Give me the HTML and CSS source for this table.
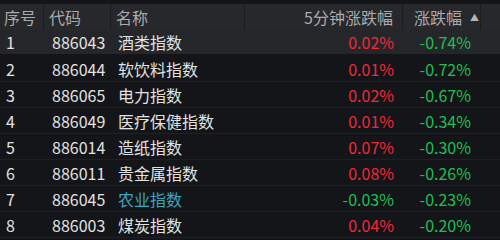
FILE: index.html
```html
<!DOCTYPE html>
<html>
<head>
<meta charset="utf-8">
<link rel="stylesheet" href="styles.css">
</head>
<body>
<div class="table">
  <div class="row head">
    <div class="c idx">序号</div>
    <div class="c code">代码</div>
    <div class="c name">名称</div>
    <div class="c m5">5分钟涨跌幅</div>
    <div class="c chg">涨跌幅<span class="arrow">▲</span></div>
    <div class="c tail"></div>
  </div>
  <div class="row sel">
    <div class="c idx">1</div><div class="c code">886043</div><div class="c name">酒类指数</div><div class="c m5 up">0.02%</div><div class="c chg down">-0.74%</div><div class="c tail"></div>
  </div>
  <div class="row">
    <div class="c idx">2</div><div class="c code">886044</div><div class="c name">软饮料指数</div><div class="c m5 up">0.01%</div><div class="c chg down">-0.72%</div><div class="c tail"></div>
  </div>
  <div class="row">
    <div class="c idx">3</div><div class="c code">886065</div><div class="c name">电力指数</div><div class="c m5 up">0.02%</div><div class="c chg down">-0.67%</div><div class="c tail"></div>
  </div>
  <div class="row">
    <div class="c idx">4</div><div class="c code">886049</div><div class="c name">医疗保健指数</div><div class="c m5 up">0.01%</div><div class="c chg down">-0.34%</div><div class="c tail"></div>
  </div>
  <div class="row">
    <div class="c idx">5</div><div class="c code">886014</div><div class="c name">造纸指数</div><div class="c m5 up">0.07%</div><div class="c chg down">-0.30%</div><div class="c tail"></div>
  </div>
  <div class="row">
    <div class="c idx">6</div><div class="c code">886011</div><div class="c name">贵金属指数</div><div class="c m5 up">0.08%</div><div class="c chg down">-0.26%</div><div class="c tail"></div>
  </div>
  <div class="row">
    <div class="c idx">7</div><div class="c code">886045</div><div class="c name teal">农业指数</div><div class="c m5 down">-0.03%</div><div class="c chg down">-0.23%</div><div class="c tail"></div>
  </div>
  <div class="row">
    <div class="c idx">8</div><div class="c code">886003</div><div class="c name">煤炭指数</div><div class="c m5 up">0.04%</div><div class="c chg down">-0.20%</div><div class="c tail"></div>
  </div>
</div>
</body>
</html>
```
FILE: styles.css
```css
html, body {
  margin: 0;
  padding: 0;
  background: #141518;
  width: 500px;
  height: 240px;
  overflow: hidden;
}
.table {
  padding-top: 4px;
  background: #141518;
  font-family: "Noto Sans CJK SC", "Noto Sans", sans-serif;
  font-size: 16px;
  color: #e2e2e2;
}
.row {
  display: grid;
  grid-template-columns: 44px 67px 134px 158px 78px 19px;
  height: 25px;
  border-bottom: 1px solid #1f2024;
  align-items: center;
}
.row.head {
  background: #27282c;
  color: #ababab;
  height: 26px;
  border-bottom: none;
}
.row.sel {
  background: #25262a;
  border-bottom: 2px solid #141518;
  height: 24px;
}
.c {
  height: 100%;
  display: flex;
  align-items: center;
  white-space: nowrap;
  line-height: 1;
}
.head .c {
  border-right: 1px solid #1a1b1e;
}
.head .c.tail { border-right: none; }
.idx { padding-left: 6px; }
.head .idx { padding-left: 4px; }
.code { padding-left: 8px; }
.head .code { padding-left: 5px; }
.name { padding-left: 7px; }
.head .name { padding-left: 5px; }
.m5 { justify-content: flex-end; padding-right: 9px; }
.chg { justify-content: flex-end; padding-right: 10px; }
.head .chg { justify-content: flex-start; padding-left: 11px; padding-right: 0; }
.arrow {
  font-size: 9px;
  margin-left: 8px;
  color: #b5b5b5;
}
.up { color: #f0283a; }
.down { color: #1fbf55; }
.teal { color: #3aa7c0; }
```
